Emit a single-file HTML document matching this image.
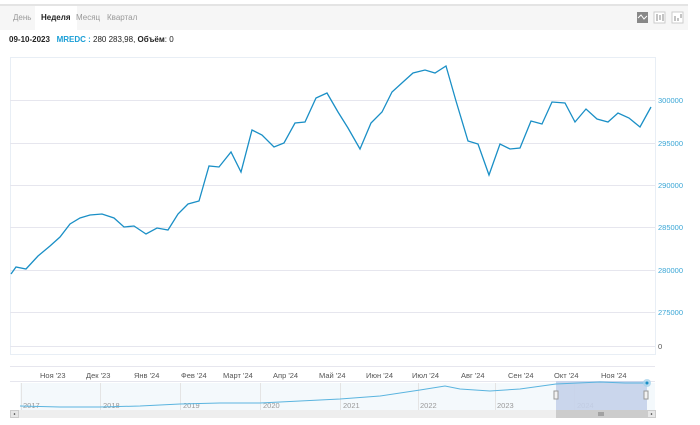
<!DOCTYPE html>
<html><head><meta charset="utf-8"><style>
body{margin:0;width:700px;height:425px;background:#fff;font-family:"Liberation Sans",sans-serif;position:relative;overflow:hidden}
.topline{position:absolute;left:0;top:4px;width:688px;height:2px;background:#e4e4e4}
.bar{position:absolute;left:0;top:6px;width:688px;height:24px;background:#f6f6f6}
.tab{position:absolute;top:13px;font-size:8px;color:#999}
.act{background:#fff;top:6px;height:24px;line-height:24px;color:#222;font-weight:bold;padding:0 6px}
.info{position:absolute;left:9px;top:35px;font-size:8px;color:#222}
svg{position:absolute;left:0;top:0}
</style></head><body>
<div class="topline"></div>
<div class="bar"></div>
<div class="tab" style="left:13px">День</div>
<div class="tab act" style="left:35px;top:6px">Неделя</div>
<div class="tab" style="left:76px">Месяц</div>
<div class="tab" style="left:107px">Квартал</div>
<div class="info"><b>09-10-2023</b>&nbsp;&nbsp; <b style="color:#1a9ed6">MREDC :</b> 280 283,98, <b>Объём</b>: 0</div>
<svg width="700" height="425" font-family="Liberation Sans, sans-serif">
<rect x="637" y="12" width="11" height="11" fill="#888"/><path d="M638 18 l3-3 3 4 3-3" stroke="#fff" fill="none"/>
<rect x="654" y="12" width="11" height="11" fill="#fff" stroke="#ccc"/><path d="M657 14v7M660 15v5M663 14v7" stroke="#888"/>
<rect x="672" y="12" width="11" height="11" fill="#fff" stroke="#ccc"/><path d="M675 16v5M678 18v3M681 14v4" stroke="#888"/>
<rect x="10.5" y="57.5" width="645" height="297" fill="none" stroke="#e8eef5"/>
<g stroke="#e6e6ee" stroke-width="1">
<line x1="10" y1="100.5" x2="655" y2="100.5"/><line x1="10" y1="143.5" x2="655" y2="143.5"/>
<line x1="10" y1="185.5" x2="655" y2="185.5"/><line x1="10" y1="227.5" x2="655" y2="227.5"/>
<line x1="10" y1="270.5" x2="655" y2="270.5"/><line x1="10" y1="312.5" x2="655" y2="312.5"/>
<line x1="10" y1="346.5" x2="655" y2="346.5"/><line x1="10" y1="366.5" x2="655" y2="366.5"/>
<line x1="10" y1="381.5" x2="655" y2="381.5"/>
</g>
<g font-size="7.5" fill="#3aa6d6">
<text x="658" y="103">300000</text><text x="658" y="146">295000</text><text x="658" y="188">290000</text>
<text x="658" y="230">285000</text><text x="658" y="273">280000</text><text x="658" y="315">275000</text>
</g>
<text x="658" y="349" font-size="7.5" fill="#555">0</text>
<polyline fill="none" stroke="#1a8fc6" stroke-width="1.3" points="11,274 16,267 26,269 38,256 50,246 60,237 70,224 80,218 90,215 102,214 114,218 124,227 134,226 146,234 157,228 168,230 178,214 188,204 199,201 209,166 219,167 231,152 241,172 252,130 262,135 274,147 284,143 295,123 305,122 316,98 327,93 338,112 348,128 360,149 371,123 382,112 392,92 403,82 413,73 425,70 435,73 446,66 456,101 468,141 478,144 489,175 500,144 510,149 520,148 531,121 542,124 552,102 565,103 575,122 586,109 597,119 608,122 618,113 629,118 640,127 651,107"/>
<g font-size="7.5" fill="#555">
<text x="40" y="378">Ноя '23</text><text x="86" y="378">Дек '23</text><text x="134" y="378">Янв '24</text>
<text x="181" y="378">Фев '24</text><text x="223" y="378">Март '24</text><text x="273" y="378">Апр '24</text>
<text x="319" y="378">Май '24</text><text x="366" y="378">Июн '24</text><text x="412" y="378">Июл '24</text>
<text x="461" y="378">Авг '24</text><text x="508" y="378">Сен '24</text><text x="554" y="378">Окт '24</text>
<text x="601" y="378">Ноя '24</text>
</g>
<rect x="20" y="383" width="635" height="27" fill="#f4f9fc"/>
<g stroke="#e4e4e4"><line x1="21.5" y1="383" x2="21.5" y2="410"/><line x1="100.5" y1="383" x2="100.5" y2="410"/><line x1="180.5" y1="383" x2="180.5" y2="410"/><line x1="260.5" y1="383" x2="260.5" y2="410"/><line x1="340.5" y1="383" x2="340.5" y2="410"/><line x1="418.5" y1="383" x2="418.5" y2="410"/><line x1="495.5" y1="383" x2="495.5" y2="410"/><line x1="574.5" y1="383" x2="574.5" y2="410"/></g>
<g font-size="7.5" fill="#999"><text x="23" y="408">2017</text><text x="103" y="408">2018</text><text x="183" y="408">2019</text><text x="263" y="408">2020</text><text x="343" y="408">2021</text><text x="420" y="408">2022</text><text x="497" y="408">2023</text><text x="577" y="408">2024</text></g>
<rect x="556" y="381" width="91" height="29" fill="#c5d2ea" opacity="0.9"/>
<polyline fill="none" stroke="#5ab4df" stroke-width="1" points="20,406 60,407 100,407 140,406 180,404 220,403 260,403 300,401 340,399 380,396 420,390 445,386 460,389 490,391 520,389 556,384 600,382 625,383 646,383"/>
<circle cx="647" cy="383" r="4" fill="#a8d3ec" opacity="0.8"/><circle cx="647" cy="383" r="1.5" fill="#1a8fc6"/>
<rect x="554" y="391" width="4" height="8" fill="#f2f2f2" stroke="#999"/>
<rect x="644" y="391" width="4" height="8" fill="#f2f2f2" stroke="#999"/>
<rect x="10" y="410" width="645" height="8" fill="#eee"/>
<rect x="556" y="410" width="91" height="8" fill="#ccc"/>
<path d="M599 412v4M601 412v4M603 412v4" stroke="#555" stroke-width="0.7"/>
<rect x="10.5" y="410.5" width="8" height="7" fill="#e6e6e6" stroke="#ccc"/><rect x="647.5" y="410.5" width="8" height="7" fill="#e6e6e6" stroke="#ccc"/>
<circle cx="14.5" cy="414" r="0.8" fill="#333"/><circle cx="651.5" cy="414" r="0.8" fill="#333"/>
</svg>
</body></html>
